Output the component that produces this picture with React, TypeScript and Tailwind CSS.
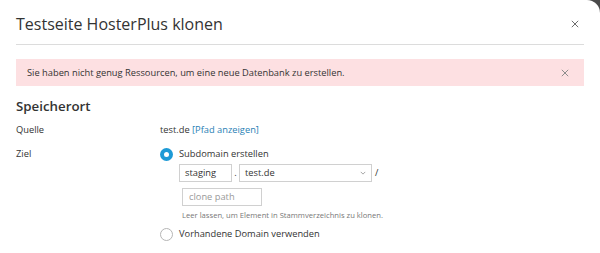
import React from 'react';

const Cross: React.FC<{ className?: string }> = ({ className }) => (
    <svg viewBox="0 0 10 10" className={className} fill="none" stroke="currentColor" strokeWidth="1.2">
        <path d="M1 1 L9 9 M9 1 L1 9" />
    </svg>
);

const App: React.FC = () => {
    return (
        <div className="bg-[#4a4a4a] h-[253px] w-[600px] overflow-hidden" style={{ fontFamily: '"Open Sans", sans-serif' }}>
            <div className="bg-white rounded-tr-[13px] h-full px-4 text-[#333]">
                <div className="flex items-center justify-between h-[45px] border-b border-[#dcdcdc] pt-[4px]">
                    <h1 className="text-[16px] leading-none">Testseite HosterPlus klonen</h1>
                    <Cross className="w-[8px] h-[8px] text-[#666] mr-[5px]" />
                </div>

                <div className="mt-[14px] h-[27px] bg-[#fde0e2] flex items-center justify-between pl-[11px] pr-[15px]">
                    <span className="text-[9.3px]">Sie haben nicht genug Ressourcen, um eine neue Datenbank zu erstellen.</span>
                    <Cross className="w-[8px] h-[8px] text-[#888]" />
                </div>

                <h2 className="text-[13.3px] font-semibold mt-[11px] leading-[18px]">Speicherort</h2>

                <div className="grid grid-cols-[144px_1fr] text-[9.3px] mt-[8px]">
                    <div className="leading-[14px]">Quelle</div>
                    <div className="leading-[14px]">
                        test.de <span className="text-[#2a7fb5]">[Pfad anzeigen]</span>
                    </div>

                    <div className="leading-[14px] mt-[10px]">Ziel</div>
                    <div className="mt-[10px]">
                        <label className="flex items-center gap-[6px] leading-[14px]">
                            <span className="w-[13px] h-[13px] rounded-full bg-[#1d9ad6] flex items-center justify-center">
                                <span className="w-[5px] h-[5px] rounded-full bg-white" />
                            </span>
                            Subdomain erstellen
                        </label>
                        <div className="pl-[19px] mt-[3px]">
                            <div className="flex items-center">
                                <div className="w-[53px] h-[18px] border border-[#d0d0d0] flex items-center px-[5px]">staging</div>
                                <span className="w-[7px] text-center">.</span>
                                <div className="w-[133px] h-[18px] border border-[#d0d0d0] flex items-center justify-between px-[5px]">
                                    test.de
                                    <svg viewBox="0 0 8 5" className="w-[6px] h-[4px] text-[#888]" fill="none" stroke="currentColor" strokeWidth="1">
                                        <path d="M1 1 L4 4 L7 1" />
                                    </svg>
                                </div>
                                <span className="ml-[3px]">/</span>
                            </div>
                            <div className="ml-[3px] mt-[6px] w-[80px] h-[18px] border border-[#d0d0d0] flex items-center px-[6px] text-[#999]">clone path</div>
                            <div className="ml-[3px] mt-[3px] text-[7.65px] text-[#777] leading-[12px]">Leer lassen, um Element in Stammverzeichnis zu klonen.</div>
                        </div>
                        <label className="flex items-center gap-[6px] leading-[14px] mt-[6px]">
                            <span className="w-[13px] h-[13px] rounded-full border border-[#b5b5b5] bg-white" />
                            Vorhandene Domain verwenden
                        </label>
                    </div>
                </div>
            </div>
        </div>
    );
};

export default App;
